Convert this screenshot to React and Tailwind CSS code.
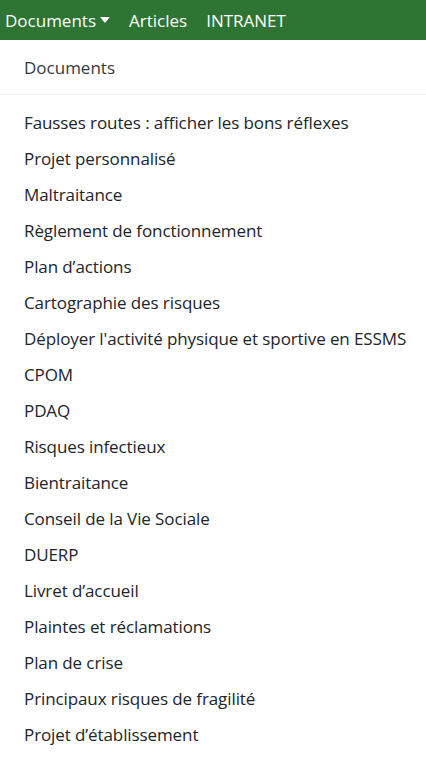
import React from 'react';

const ITEMS = [
  'Fausses routes : afficher les bons réflexes',
  'Projet personnalisé',
  'Maltraitance',
  'Règlement de fonctionnement',
  'Plan d’actions',
  'Cartographie des risques',
  "Déployer l'activité physique et sportive en ESSMS",
  'CPOM',
  'PDAQ',
  'Risques infectieux',
  'Bientraitance',
  'Conseil de la Vie Sociale',
  'DUERP',
  'Livret d’accueil',
  'Plaintes et réclamations',
  'Plan de crise',
  'Principaux risques de fragilité',
  'Projet d’établissement',
];

export default function App() {
  return (
    <div className="min-h-screen bg-white font-['Open_Sans','Liberation_Sans',sans-serif] text-[17px]">
      {/* navbar */}
      <nav className="h-[40px] bg-[#2e7432] flex items-center px-[5px] gap-[19px] text-white text-[17px] leading-none whitespace-nowrap">
        <span className="flex items-center gap-[4px]">
          Documents
          <svg width="10" height="6" viewBox="0 0 10 6"><path d="M0 0h10L5 6z" fill="white" /></svg>
        </span>
        <span>Articles</span>
        <span>INTRANET</span>
      </nav>

      {/* dropdown */}
      <div className="pt-[16px]">
        <div className="px-[24px] h-[24px] flex items-center text-[#343a40]">Documents</div>
        <div className="mt-[14px] border-t border-[#e9ecef]" />
        <ul className="pt-[10px]">
          {ITEMS.map((item) => (
            <li key={item} className="px-[24px] h-[36px] flex items-center text-[#212529] whitespace-nowrap tracking-[-0.1px]">
              {item}
            </li>
          ))}
        </ul>
      </div>
    </div>
  );
}
